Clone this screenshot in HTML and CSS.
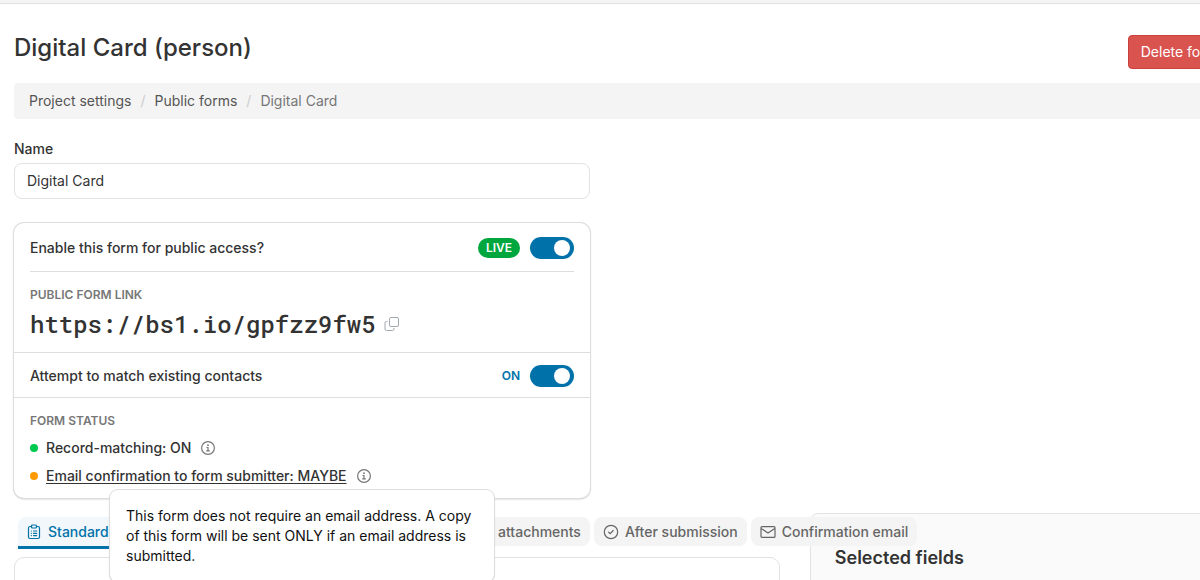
FILE: index.html
```html
<!doctype html>
<html lang="en">
  <head>
    <meta charset="UTF-8" />
    <meta name="viewport" content="width=device-width, initial-scale=1.0" />
    <title>Digital Card (person)</title>
    <link rel="stylesheet" href="styles.css">
  </head>
  <body>
    <div class="topbar"></div>
    <div class="page">
      <header class="page-header">
        <h1>Digital Card (person)</h1>
        <button type="button" class="btn-danger">Delete form</button>
      </header>

      <nav aria-label="Breadcrumb">
        <ol class="breadcrumb">
          <li><a href="#">Project settings</a></li>
          <li><a href="#">Public forms</a></li>
          <li class="current">Digital Card</li>
        </ol>
      </nav>

      <div class="settings">
        <label class="field-label" for="name">Name</label>
        <input class="text-input" type="text" id="name" value="Digital Card">

        <section class="card">
          <div class="card-section">
            <div class="switch-row underlined">
              <label for="public">Enable this form for public access?</label>
              <span class="badge">LIVE</span>
              <input class="switch" type="checkbox" id="public" checked>
            </div>
            <h2 class="caption">Public form link</h2>
            <div class="link-row">
              <span class="form-link">https://bs1.io/gpfzz9fw5</span>
              <button type="button" class="icon-btn" aria-label="Copy link">
                <svg width="16" height="16" viewBox="0 0 16 16" fill="none" stroke="currentColor" stroke-width="1">
                  <rect x="5.5" y="1.5" width="9" height="9" rx="1.5" />
                  <path d="M3.5 5.5H2.5a1.5 1.5 0 0 0-1.5 1.5v6a1.5 1.5 0 0 0 1.5 1.5h6a1.5 1.5 0 0 0 1.5-1.5v-1" />
                </svg>
              </button>
            </div>
          </div>

          <div class="card-section">
            <div class="switch-row">
              <label for="match">Attempt to match existing contacts</label>
              <span class="state">ON</span>
              <input class="switch" type="checkbox" id="match" checked>
            </div>
          </div>

          <div class="card-section">
            <h2 class="caption">Form status</h2>
            <ul class="status-list">
              <li>
                <span class="dot green"></span>
                <span>Record-matching: ON</span>
                <svg class="info" width="16" height="16" viewBox="0 0 16 16" fill="none" stroke="currentColor" stroke-width="1.2">
                  <circle cx="8" cy="8" r="6.4" />
                  <path d="M6.5 7.5h1.5v3.3M6.2 10.8h3.6" />
                  <circle cx="8" cy="5.2" r=".9" fill="currentColor" stroke="none" />
                </svg>
              </li>
              <li>
                <span class="dot orange"></span>
                <a href="#" aria-describedby="email-tip">Email confirmation to form submitter: MAYBE</a>
                <svg class="info" width="16" height="16" viewBox="0 0 16 16" fill="none" stroke="currentColor" stroke-width="1.2">
                  <circle cx="8" cy="8" r="6.4" />
                  <path d="M6.5 7.5h1.5v3.3M6.2 10.8h3.6" />
                  <circle cx="8" cy="5.2" r=".9" fill="currentColor" stroke="none" />
                </svg>
                <div class="tooltip" id="email-tip" role="tooltip">This form does not require an email address. A copy of this form will be sent ONLY if an email address is submitted.</div>
              </li>
            </ul>
          </div>
        </section>
      </div>

      <div class="columns">
        <main>
          <nav class="tabs" aria-label="Form sections">
            <a class="tab active" href="#">
              <svg width="16" height="16" viewBox="0 0 16 16" fill="none" stroke="currentColor" stroke-width="1.2" stroke-linecap="round" stroke-linejoin="round">
                <path d="M5.5 2.5H4A1.5 1.5 0 0 0 2.5 4v9A1.5 1.5 0 0 0 4 14.5h8a1.5 1.5 0 0 0 1.5-1.5V4A1.5 1.5 0 0 0 12 2.5h-1.5" />
                <rect x="5.5" y="1" width="5" height="3" rx="1" />
                <path d="M5.3 7h.1M7.5 7h3.2M5.3 9.3h.1M7.5 9.3h3.2M5.3 11.6h.1M7.5 11.6h3.2" />
              </svg>
              Standard fields
            </a>
            <a class="tab" href="#">
              <svg width="16" height="16" viewBox="0 0 16 16" fill="none" stroke="currentColor">
                <rect x="2" y="2.5" width="12" height="11" rx="1.5" />
                <path d="M5 6h6M5 8.5h6M5 11h4" />
              </svg>
              Additional custom questions
            </a>
            <a class="tab" href="#">
              <svg width="16" height="16" viewBox="0 0 16 16" fill="none" stroke="currentColor">
                <path d="M13 7.5l-5 5a3 3 0 0 1-4.3-4.3l5.5-5.5a2 2 0 0 1 2.8 2.8L6.6 11" />
              </svg>
              Notes and attachments
            </a>
            <a class="tab" href="#">
              <svg width="16" height="16" viewBox="0 0 16 16" fill="none" stroke="currentColor" stroke-width="1.2">
                <circle cx="8" cy="8" r="6.7" />
                <path d="M5.7 8.2l1.6 1.5 2.9-3.2" stroke-linecap="round" stroke-linejoin="round" />
              </svg>
              After submission
            </a>
            <a class="tab" href="#">
              <svg width="16" height="16" viewBox="0 0 16 16" fill="none" stroke="currentColor" stroke-width="1.2" stroke-linejoin="round">
                <rect x="1" y="2.6" width="14" height="10.8" rx="1" />
                <path d="M1.2 4.5L8 9l6.8-4.5" />
              </svg>
              Confirmation email
            </a>
          </nav>
          <div class="panel"></div>
        </main>
        <aside class="side">
          <h2>Selected fields</h2>
        </aside>
      </div>
    </div>
  </body>
</html>
```
FILE: styles.css
```css
* {
  box-sizing: border-box;
}
body {
  margin: 0;
  overflow: hidden;
  background: #fff;
  color: #333;
  font-family: Inter, sans-serif;
  font-size: 14px;
  line-height: 20px;
}
h1, h2, ol, ul {
  margin: 0;
  padding: 0;
  list-style: none;
}
a {
  color: inherit;
}
input, button {
  font: inherit;
  color: inherit;
}
svg {
  flex: none;
}
.topbar {
  height: 4px;
  background: #f4f4f4;
  border-bottom: 1px solid #e2e2e2;
}

/* the page is a little wider than the window and runs off to the right */
.page {
  margin-right: -31px;
  padding: 31px 0 0 14px;
}
.page-header {
  display: flex;
  justify-content: space-between;
  height: 34px;
  margin-bottom: 14px;
}
h1 {
  font-size: 24px;
  font-weight: 500;
  line-height: 26px;
}
.btn-danger {
  padding: 0 12px;
  border: 1px solid #c9413c;
  border-radius: 4px;
  background: #d9534f;
  color: #fff;
  white-space: nowrap;
}
.breadcrumb {
  display: flex;
  padding: 8px 15px;
  background: #f4f4f4;
  border-radius: 4px;
  color: #777;
}
.breadcrumb a {
  color: #555;
  text-decoration: none;
}
.breadcrumb li + li::before {
  content: "/";
  padding: 0 9px;
  color: #ccc;
}

.settings {
  max-width: 576px;
  padding-top: 20px;
}
.field-label {
  display: block;
  margin-bottom: 4px;
  font-weight: 500;
}
.text-input {
  display: block;
  width: 100%;
  height: 36px;
  padding: 0 12px 2px;
  border: 1px solid #e2e2e2;
  border-radius: 8px;
  background: #fff;
}

.card {
  margin-top: 24px;
  border-radius: 10px;
  background: #fff;
  box-shadow: 0 0 0 1px #ddd, 0 1px 2px #aaa;
  font-weight: 500;
}
.card-section {
  padding: 0 16px 10px;
}
.card-section:last-child {
  padding-bottom: 8px;
}
.card-section + .card-section {
  border-top: 1px solid #ddd;
}
.switch-row {
  display: flex;
  align-items: center;
  gap: 10px;
  padding-top: 12px;
}
.switch-row label {
  flex: 1;
}
.switch-row.underlined {
  padding: 14px 0 12px;
  border-bottom: 1px solid #ddd;
}
.badge {
  padding: 0 8px;
  border-radius: 10px;
  background: #00a63e;
  color: #fff;
  font-size: 12px;
  font-weight: 600;
}
.state {
  color: #0072a9;
  font-size: 12px;
  font-weight: 600;
}
.switch {
  appearance: none;
  display: flex;
  align-items: center;
  width: 44px;
  height: 22px;
  margin: 0;
  padding: 0 4px;
  border-radius: 11px;
  background: #ccc;
}
.switch::before {
  content: "";
  width: 16px;
  height: 16px;
  border-radius: 8px;
  background: #fff;
}
.switch:checked {
  justify-content: flex-end;
  background: #0072a9;
}
.caption {
  padding-top: 13px;
  color: #777;
  font-size: 12px;
  font-weight: 600;
  text-transform: uppercase;
}
.link-row {
  display: flex;
  align-items: center;
  gap: 8px;
  height: 36px;
  margin-top: 1px;
}
.form-link {
  font-family: "Roboto Mono", "DejaVu Sans Mono", monospace;
  font-size: 24px;
}
.icon-btn {
  display: flex;
  padding: 0;
  border: 0;
  background: none;
  color: #a0a8b0;
}

.status-list li {
  position: relative;
  display: flex;
  align-items: center;
  height: 28px;
}
.status-list li:first-child {
  margin-top: 3px;
}
.dot {
  width: 8px;
  height: 8px;
  margin-right: 8px;
  border-radius: 4px;
}
.green {
  background: #00c950;
}
.orange {
  background: #fe9a00;
}
.status-list a {
  text-underline-offset: 2px;
}
.info {
  margin-left: 9px;
  color: #777;
}
.tooltip {
  position: absolute;
  z-index: 2;
  top: 28px;
  left: 80px;
  width: 384px;
  padding: 16px;
  border-radius: 8px;
  background: #fff;
  box-shadow: 0 0 0 1px #ddd, 0 1px 2px #bbb;
  color: #111;
  font-weight: 400;
}

.columns {
  display: grid;
  grid-template-columns: minmax(0, 20fr) minmax(0, 11fr);
  gap: 30px;
  margin-top: 15px;
}
.tabs {
  position: relative;
  z-index: 1;
  display: flex;
  gap: 4px;
  padding: 4px 4px 0;
}
.tab {
  display: flex;
  align-items: center;
  gap: 6px;
  height: 29px;
  padding: 0 9px;
  border-radius: 8px;
  background: #f4f4f4;
  color: #666;
  font-weight: 500;
  text-decoration: none;
  white-space: nowrap;
}
.tab.active {
  height: 32px;
  padding: 0 8px;
  border-bottom: 3px solid #0072a9;
  border-radius: 8px 8px 0 0;
  background: #f1f7fb;
  color: #0072a9;
}
.panel {
  height: 120px;
  margin-top: 8px;
  border: 1px solid #e2e2e2;
  border-radius: 10px;
}
.side {
  padding: 32px 24px;
  border: 1px solid #e2e2e2;
  border-radius: 8px;
  background: #fafafa;
}
.side h2 {
  font-size: 18px;
  font-weight: 600;
  line-height: 24px;
}
```
